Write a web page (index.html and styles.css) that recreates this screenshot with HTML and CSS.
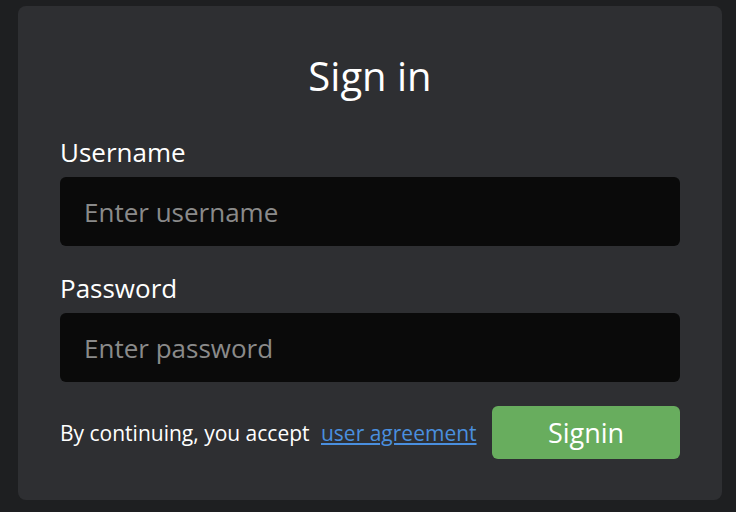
FILE: index.html
```html
<!DOCTYPE html>
<html lang="en">
<head>
  <meta charset="UTF-8" />
  <title>Sign in</title>
  <link rel="stylesheet" href="styles.css">
</head>
<body>
  <div class="card">
    <h2>Sign in</h2>
    <form class="signin-form" onsubmit="return false;">
      <label class="field">
        <span class="field-label">Username</span>
        <input type="text" placeholder="Enter username">
      </label>
      <label class="field">
        <span class="field-label">Password</span>
        <input type="password" placeholder="Enter password">
      </label>
      <div class="form-footer">
        <div class="terms">
          By continuing, you accept <a href="#">user agreement</a>
        </div>
        <button type="submit" class="signin-btn">Signin</button>
      </div>
    </form>
  </div>
</body>
</html>
```

FILE: styles.css
```css
body {
  font-family: 'Open Sans', 'Liberation Sans', sans-serif;
  background: #1e1f21;
  margin: 0;
  padding: 6px 14px 12px 18px;
  color: #ffffff;
}

.card {
  background: #2e2f32;
  border-radius: 8px;
  height: 494px;
  box-sizing: border-box;
  padding: 42px 42px 0 42px;
}

h2 {
  margin: 0;
  text-align: center;
  font-weight: 400;
  font-size: 40px;
  line-height: 56px;
}

.signin-form {
  margin-top: 31px;
  display: flex;
  flex-direction: column;
}

.field {
  display: flex;
  flex-direction: column;
  margin-bottom: 25px;
}

.field-label {
  font-size: 26px;
  line-height: 34px;
  margin-bottom: 8px;
}

.field input {
  height: 69px;
  box-sizing: border-box;
  background: #0a0a0a;
  border: none;
  border-radius: 6px;
  padding: 0 24px;
  font-family: inherit;
  font-size: 26px;
  color: #ffffff;
  outline: none;
}

.field input::placeholder {
  color: #8a8a8a;
}

.form-footer {
  display: flex;
  align-items: center;
  justify-content: space-between;
  margin-top: -1px;
}

.terms {
  font-size: 21px;
}

.terms a {
  color: #4a8fdf;
  margin-left: 6px;
}

.signin-btn {
  width: 188px;
  height: 53px;
  background: #68ad5e;
  border: none;
  border-radius: 6px;
  color: #ffffff;
  font-family: inherit;
  font-size: 27px;
  cursor: pointer;
}
```
